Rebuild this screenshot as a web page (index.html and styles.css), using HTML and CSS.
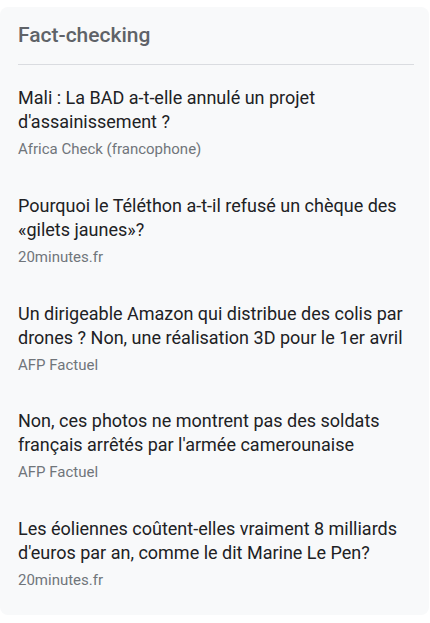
FILE: index.html
```html
<!DOCTYPE html>
<html lang="fr">
<head>
  <meta charset="UTF-8">
  <meta name="viewport" content="width=device-width, initial-scale=1.0">
  <title>Fact-checking</title>
  <link rel="stylesheet" href="styles.css">
</head>
<body>

  <!-- Fact-checking card -->
  <section class="card">
    <h2 class="card-title">Fact-checking</h2>
    <ul class="checks">
      <li class="check">
        <a href="#" class="check-title">Mali : La BAD a-t-elle annulé un projet d'assainissement ?</a>
        <div class="check-source">Africa Check (francophone)</div>
      </li>
      <li class="check">
        <a href="#" class="check-title">Pourquoi le Téléthon a-t-il refusé un chèque des «gilets jaunes»?</a>
        <div class="check-source">20minutes.fr</div>
      </li>
      <li class="check">
        <a href="#" class="check-title">Un dirigeable Amazon qui distribue des colis par drones ? Non, une réalisation 3D pour le 1er avril</a>
        <div class="check-source">AFP Factuel</div>
      </li>
      <li class="check">
        <a href="#" class="check-title">Non, ces photos ne montrent pas des soldats français arrêtés par l'armée camerounaise</a>
        <div class="check-source">AFP Factuel</div>
      </li>
      <li class="check">
        <a href="#" class="check-title">Les éoliennes coûtent-elles vraiment 8 milliards d'euros par an, comme le dit Marine Le Pen?</a>
        <div class="check-source">20minutes.fr</div>
      </li>
    </ul>
  </section>

</body>
</html>
```

FILE: styles.css
```css
/* General Styles */
body {
  margin: 0;
  padding: 7px 0 0;
  background-color: #fff;
  font-family: Roboto, "Liberation Sans", Arial, sans-serif;
}

.card {
  width: 429px;
  box-sizing: border-box;
  padding: 0 15px 25px 18px;
  background-color: #f8f9fa;
  border-radius: 8px;
}

.card-title {
  margin: 0;
  padding: 16px 0 17px;
  font-size: 21px;
  line-height: 24px;
  font-weight: 500;
  color: #5f6368;
  border-bottom: 1px solid #dadce0;
}

.checks {
  list-style-type: none;
  margin: 0;
  padding: 0;
}

.check {
  padding-top: 21px;
}

.check + .check {
  padding-top: 34.75px;
}

.check-title {
  display: block;
  font-size: 18px;
  line-height: 24px;
  color: #202124;
  text-decoration: none;
}

.check-source {
  margin-top: 5px;
  font-size: 15px;
  line-height: 20px;
  color: #70757a;
}
```
